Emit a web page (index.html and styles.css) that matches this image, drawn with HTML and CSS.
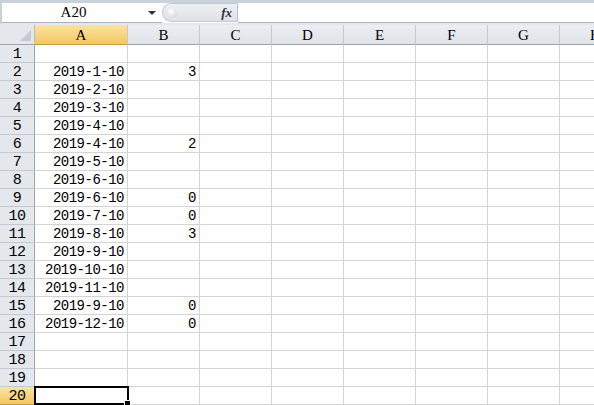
FILE: index.html
```html
<!DOCTYPE html>
<html lang="zh">
  <head>
    <meta charset="UTF-8" />
    <title>Sheet1</title>
    <link rel="stylesheet" href="styles.css">
  </head>
  <body>
    <div class="fbar">
      <div class="namebox">
        <span class="name">A20</span>
        <span class="drop"></span>
      </div>
      <div class="grip">
        <span class="knob"></span>
        <span class="fx">fx</span>
      </div>
      <div class="formula"></div>
    </div>

    <div class="sheet">
      <div class="corner"><span class="tri"></span></div>
      <div class="ch sel">A</div>
      <div class="ch">B</div>
      <div class="ch">C</div>
      <div class="ch">D</div>
      <div class="ch">E</div>
      <div class="ch">F</div>
      <div class="ch">G</div>
      <div class="ch">H</div>

      <div class="rh">1</div><div class="c"></div><div class="c"></div><div class="c"></div><div class="c"></div><div class="c"></div><div class="c"></div><div class="c"></div><div class="c"></div>
      <div class="rh">2</div><div class="c">2019-1-10</div><div class="c">3</div><div class="c"></div><div class="c"></div><div class="c"></div><div class="c"></div><div class="c"></div><div class="c"></div>
      <div class="rh">3</div><div class="c">2019-2-10</div><div class="c"></div><div class="c"></div><div class="c"></div><div class="c"></div><div class="c"></div><div class="c"></div><div class="c"></div>
      <div class="rh">4</div><div class="c">2019-3-10</div><div class="c"></div><div class="c"></div><div class="c"></div><div class="c"></div><div class="c"></div><div class="c"></div><div class="c"></div>
      <div class="rh">5</div><div class="c">2019-4-10</div><div class="c"></div><div class="c"></div><div class="c"></div><div class="c"></div><div class="c"></div><div class="c"></div><div class="c"></div>
      <div class="rh">6</div><div class="c">2019-4-10</div><div class="c">2</div><div class="c"></div><div class="c"></div><div class="c"></div><div class="c"></div><div class="c"></div><div class="c"></div>
      <div class="rh">7</div><div class="c">2019-5-10</div><div class="c"></div><div class="c"></div><div class="c"></div><div class="c"></div><div class="c"></div><div class="c"></div><div class="c"></div>
      <div class="rh">8</div><div class="c">2019-6-10</div><div class="c"></div><div class="c"></div><div class="c"></div><div class="c"></div><div class="c"></div><div class="c"></div><div class="c"></div>
      <div class="rh">9</div><div class="c">2019-6-10</div><div class="c">0</div><div class="c"></div><div class="c"></div><div class="c"></div><div class="c"></div><div class="c"></div><div class="c"></div>
      <div class="rh">10</div><div class="c">2019-7-10</div><div class="c">0</div><div class="c"></div><div class="c"></div><div class="c"></div><div class="c"></div><div class="c"></div><div class="c"></div>
      <div class="rh">11</div><div class="c">2019-8-10</div><div class="c">3</div><div class="c"></div><div class="c"></div><div class="c"></div><div class="c"></div><div class="c"></div><div class="c"></div>
      <div class="rh">12</div><div class="c">2019-9-10</div><div class="c"></div><div class="c"></div><div class="c"></div><div class="c"></div><div class="c"></div><div class="c"></div><div class="c"></div>
      <div class="rh">13</div><div class="c">2019-10-10</div><div class="c"></div><div class="c"></div><div class="c"></div><div class="c"></div><div class="c"></div><div class="c"></div><div class="c"></div>
      <div class="rh">14</div><div class="c">2019-11-10</div><div class="c"></div><div class="c"></div><div class="c"></div><div class="c"></div><div class="c"></div><div class="c"></div><div class="c"></div>
      <div class="rh">15</div><div class="c">2019-9-10</div><div class="c">0</div><div class="c"></div><div class="c"></div><div class="c"></div><div class="c"></div><div class="c"></div><div class="c"></div>
      <div class="rh">16</div><div class="c">2019-12-10</div><div class="c">0</div><div class="c"></div><div class="c"></div><div class="c"></div><div class="c"></div><div class="c"></div><div class="c"></div>
      <div class="rh">17</div><div class="c"></div><div class="c"></div><div class="c"></div><div class="c"></div><div class="c"></div><div class="c"></div><div class="c"></div><div class="c"></div>
      <div class="rh">18</div><div class="c"></div><div class="c"></div><div class="c"></div><div class="c"></div><div class="c"></div><div class="c"></div><div class="c"></div><div class="c"></div>
      <div class="rh">19</div><div class="c"></div><div class="c"></div><div class="c"></div><div class="c"></div><div class="c"></div><div class="c"></div><div class="c"></div><div class="c"></div>
      <div class="rh sel">20</div><div class="c active"><span class="handle"></span></div><div class="c"></div><div class="c"></div><div class="c"></div><div class="c"></div><div class="c"></div><div class="c"></div><div class="c"></div>
    </div>
  </body>
</html>
```

FILE: styles.css
```css
html,
body {
  margin: 0;
  padding: 0;
  background: #ffffff;
  overflow: hidden;
}

body {
  width: 594px;
  height: 405px;
  font-family: "Liberation Mono", "DejaVu Sans Mono", monospace;
  font-size: 14px;
  color: #000000;
}

/* formula bar */
.fbar {
  display: flex;
  height: 25px;
  box-sizing: border-box;
  border-top: 3px solid #c9d1db;
  border-left: 2px solid #c9d1db;
  border-bottom: 2px solid #e4e8ee;
  background: #ffffff;
}

.namebox {
  width: 160px;
  height: 19px;
  border-bottom: 1px solid #a9b2bd;
  display: flex;
  align-items: center;
}

.name {
  width: 143px;
  text-align: center;
  line-height: 19px;
  font-family: "Liberation Serif", serif;
  font-size: 15px;
}

.drop {
  width: 0;
  height: 0;
  border-left: 4px solid transparent;
  border-right: 4px solid transparent;
  border-top: 4px solid #333333;
  margin-left: 3px;
}

.grip {
  width: 76px;
  height: 19px;
  box-sizing: border-box;
  border-radius: 10px 0 0 10px;
  background: linear-gradient(#eef0f3, #dde1e7);
  border: 1px solid #c3c9d1;
  border-right: 1px solid #b9c0c9;
  display: flex;
  align-items: center;
}

.knob {
  width: 10px;
  height: 10px;
  margin-left: 4px;
  border-radius: 50%;
  background: radial-gradient(circle at 40% 35%, #ffffff, #c8cdd4);
}

.fx {
  margin-left: auto;
  margin-right: 5px;
  font-family: "Liberation Serif", serif;
  font-style: italic;
  font-weight: bold;
  font-size: 13px;
  color: #333333;
}

.formula {
  flex: 1;
  height: 19px;
  border-bottom: 1px solid #a9b2bd;
}

/* grid */
.sheet {
  display: grid;
  grid-template-columns: 35px 93px 72px 72px 72px 72px 72px 72px 72px;
  grid-template-rows: 20px repeat(20, 18px);
}

.corner,
.ch,
.rh,
.c {
  box-sizing: border-box;
  border-right: 1px solid #d4d4d4;
  border-bottom: 1px solid #d4d4d4;
}

.corner {
  position: relative;
  background: #e4e7ec;
  border-right-color: #b7bcc4;
  border-bottom-color: #9ea5ae;
}

.tri {
  position: absolute;
  right: 3px;
  bottom: 3px;
  width: 0;
  height: 0;
  border-left: 11px solid transparent;
  border-bottom: 11px solid #c5cad1;
}

.ch {
  background: linear-gradient(#eceef2, #dfe3e8);
  border-right-color: #c4c9d0;
  border-bottom-color: #9ea5ae;
  text-align: center;
  line-height: 20px;
  font-family: "Liberation Serif", serif;
  font-size: 15px;
}

.rh {
  background: #e4e7ec;
  border-right-color: #9ea5ae;
  border-bottom-color: #c4c9d0;
  text-align: center;
  padding-top: 1px;
  line-height: 17px;
  font-size: 15px;
  letter-spacing: -0.5px;
}

.sel {
  background: linear-gradient(#fbe3a4, #f3c75f);
  border-bottom-color: #c89c3c;
}

.rh.sel {
  border-right-color: #c89c3c;
}

.c {
  text-align: right;
  padding-right: 3px;
  padding-top: 1px;
  line-height: 17px;
  letter-spacing: -0.5px;
  white-space: nowrap;
}

.active {
  position: relative;
  border: none;
}

.active::after {
  content: "";
  position: absolute;
  left: -1px;
  top: -1px;
  right: -1px;
  bottom: 0;
  border: 2px solid #000000;
}

.handle {
  position: absolute;
  right: -3px;
  bottom: -2px;
  width: 5px;
  height: 5px;
  background: #000000;
  border: 1px solid #ffffff;
  z-index: 1;
}
```
